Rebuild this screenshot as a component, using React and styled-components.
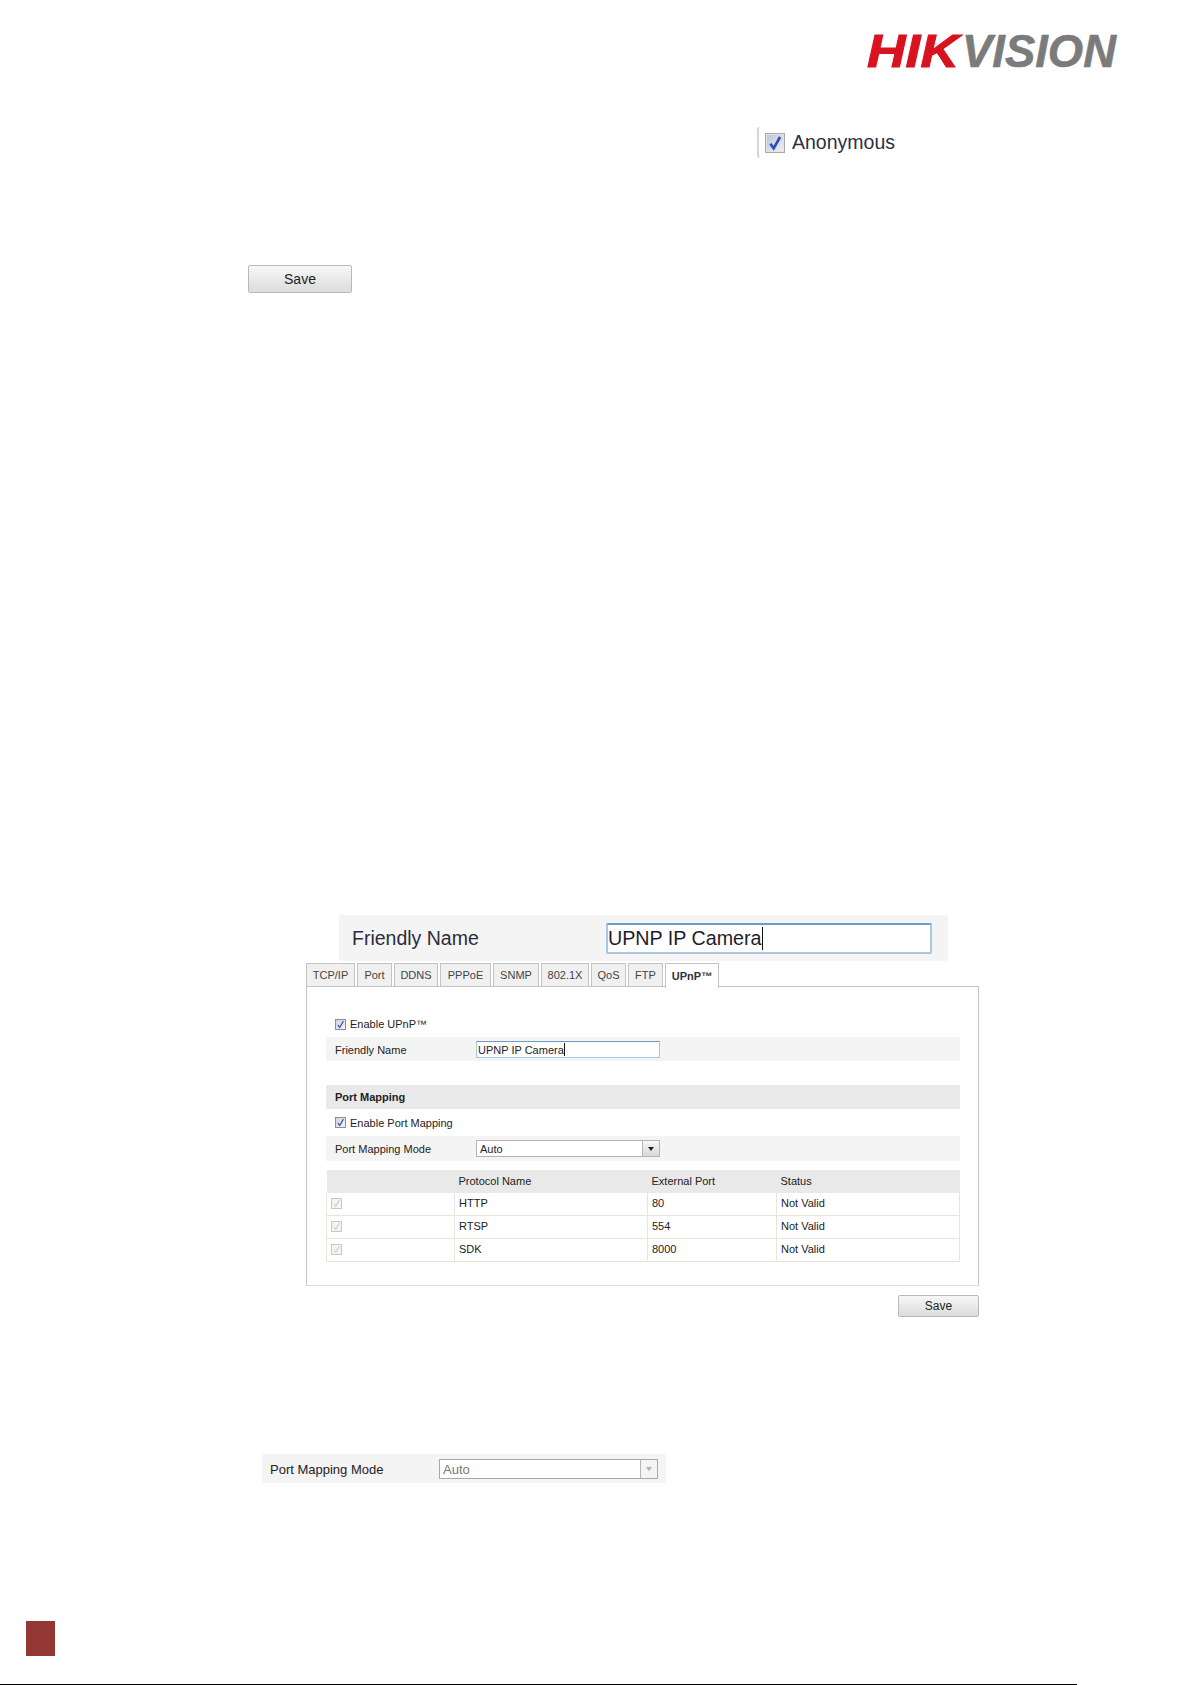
import React from 'react'
import styled, { createGlobalStyle } from 'styled-components'

const GlobalStyle = createGlobalStyle`
    html, body {
        margin: 0;
        padding: 0;
        background: #fff;
    }
    body {
        font-family: "Liberation Sans", Arial, sans-serif;
        color: #222;
    }
`

const Page = styled.div`
    width: 1192px;
    height: 1685px;
    display: flex;
    flex-direction: column;
    overflow: hidden;
`

const Header = styled.header`
    display: flex;
    justify-content: flex-end;
    padding: 25px 73px 0 0;
    height: 42px;
`

const LogoMark = styled.svg`
    flex: none;
    overflow: visible;
`

const AnonymousRow = styled.div`
    display: flex;
    align-items: center;
    margin: 60px 0 0 757px;
    height: 31px;
    border-left: 2px solid #d4d4d4;
    border-radius: 3px;
    width: 200px;
    padding-left: 6px;
    font-size: 19.5px;
    color: #2b2f45;
    gap: 7px;
`

const BigCheck = styled.span`
    width: 18px;
    height: 18px;
    border: 1px solid #a9a9a9;
    background: linear-gradient(135deg, #bcc4d6, #eef0f5);
    display: flex;
    align-items: center;
    justify-content: center;
    box-sizing: content-box;
    box-shadow: inset 0 0 0 1px #e4e4e4;
`

const SmallCheck = styled.span`
    box-sizing: border-box;
    width: 11px;
    height: 11px;
    flex: none;
    border: 1px solid ${p => (p.$disabled ? '#c8c8c8' : '#8e8e8e')};
    background: ${p => (p.$disabled ? '#f4f4f4' : 'linear-gradient(135deg, #cfd4e2, #f2f3f7)')};
    display: flex;
    align-items: center;
    justify-content: center;
`

const SaveButton = styled.button`
    display: block;
    width: ${p => p.$w}px;
    height: ${p => p.$h}px;
    margin: ${p => p.$margin};
    padding: 0;
    border: 1px solid #b9b9b9;
    border-radius: 2px;
    background: linear-gradient(#f7f7f7, #dcdcdc);
    font-family: inherit;
    font-size: ${p => p.$size}px;
    color: #222;
`

const BigNameRow = styled.div`
    display: flex;
    align-items: center;
    box-sizing: border-box;
    width: 609px;
    height: 46px;
    margin: 622px 0 0 339px;
    padding-left: 13px;
    background: #f4f4f4;
    font-size: 19.5px;
    color: #2d2b3c;
`

const BigNameLabel = styled.span`
    width: 254px;
`

const BigNameInput = styled.div`
    display: flex;
    align-items: center;
    box-sizing: border-box;
    width: 326px;
    height: 31px;
    background: #fff;
    border: 2px solid #a5c8e4;
    border-top-color: #6a9cc4;
    border-radius: 2px;
    font-size: 19.7px;
    color: #1d1d2b;
`

const Caret = styled.span`
    width: 1px;
    height: ${p => p.$h}px;
    background: #111;
`

const TabStrip = styled.div`
    display: flex;
    gap: 2px;
    margin: 2px 0 0 306px;
    height: 24px;
    position: relative;
    z-index: 1;
`

const Tab = styled.div`
    box-sizing: border-box;
    width: ${p => p.$w}px;
    height: ${p => (p.$active ? 25 : 24)}px;
    display: flex;
    align-items: center;
    justify-content: center;
    border: 1px solid #c4c4c4;
    border-bottom: ${p => (p.$active ? 'none' : '1px solid #c4c4c4')};
    background: ${p => (p.$active ? '#fff' : '#f0f0f0')};
    font-size: 11px;
    font-weight: ${p => (p.$active ? 700 : 400)};
    color: ${p => (p.$active ? '#333' : '#444')};
`

const Panel = styled.section`
    box-sizing: border-box;
    width: 673px;
    height: 300px;
    margin: -1px 0 0 306px;
    padding: 24px 18px 0 19px;
    border: 1px solid #c4c4c4;
    border-bottom-color: #dcdcdc;
    font-size: 11px;
`

const CheckRow = styled.div`
    display: flex;
    align-items: center;
    gap: 4px;
    height: ${p => p.$h}px;
    padding-left: 9px;
`

const FieldRow = styled.div`
    display: flex;
    align-items: center;
    box-sizing: border-box;
    height: ${p => p.$h}px;
    padding: ${p => (p.$nudge ? '1px' : '0')} 0 0 9px;
    background: #f4f4f4;
`

const FieldLabel = styled.span`
    width: 141px;
`

const TextField = styled.div`
    display: flex;
    align-items: center;
    box-sizing: border-box;
    width: 184px;
    height: 17px;
    padding-left: 1px;
    background: #fff;
    border: 1px solid #a5c8e4;
    border-top-color: #6a9cc4;
    border-radius: 1px;
`

const SectionTitle = styled.div`
    display: flex;
    align-items: center;
    height: 24px;
    margin-top: 24px;
    padding-left: 9px;
    background: #e9e9e9;
    font-weight: 700;
`

const Select = styled.div`
    display: flex;
    align-items: center;
    justify-content: space-between;
    box-sizing: border-box;
    width: ${p => p.$w}px;
    height: ${p => p.$h}px;
    padding-left: 3px;
    background: #fff;
    border: 1px solid ${p => (p.$disabled ? '#a8a8a8' : '#b4b4b4')};
    color: ${p => (p.$disabled ? '#777' : '#222')};
`

const SelectArrow = styled.span`
    flex: none;
    width: 17px;
    height: 100%;
    box-sizing: border-box;
    display: flex;
    align-items: center;
    justify-content: center;
    border-left: 1px solid #b4b4b4;
    background: ${p => (p.$disabled ? '#f4f4f4' : 'linear-gradient(#f8f8f8, #d8d8d8)')};
    &::after {
        content: '';
        border-style: solid;
        border-width: 4px 3.5px 0;
        border-color: ${p => (p.$disabled ? '#b0b0b0' : '#222')} transparent transparent;
    }
`

const PortTable = styled.table`
    width: 633px;
    margin-top: 9px;
    border-collapse: collapse;
    table-layout: fixed;
    font-size: 11px;
    th {
        height: 22px;
        padding: 0 0 1px 4px;
        background: #e9e9e9;
        text-align: left;
        font-weight: 400;
    }
    td {
        box-sizing: border-box;
        height: 23px;
        padding: 0 0 1px 4px;
        border: 1px solid #e8e6d9;
    }
    tbody tr:first-child td {
        height: 22px;
        border-top: none;
    }
`

const BottomRow = styled.div`
    display: flex;
    align-items: center;
    box-sizing: border-box;
    width: 404px;
    height: 29px;
    margin: 137px 0 0 262px;
    padding: 1px 0 0 8px;
    background: #f4f4f4;
    font-size: 13px;
`

const BottomLabel = styled.span`
    width: 169px;
`

const Footer = styled.footer`
    margin-top: auto;
`

const PageMark = styled.div`
    width: 29px;
    height: 35px;
    margin-left: 26px;
    background: #943634;
`

const FootLine = styled.div`
    width: 1077px;
    height: 1px;
    margin-top: 28px;
    background: #000;
`

const TickMark = ({ size, color, width }) => (
    <svg width={size} height={size} viewBox="0 0 12 12" fill="none">
        <path d="M2.5 6.5 L5 10 L9.8 1.5" stroke={color} strokeWidth={width} />
    </svg>
)

const Logo = () => (
    <LogoMark width="252" height="55" viewBox="0 0 252 55">
        <text x="0" y="42" fontFamily="Liberation Sans" fontSize="46" fontWeight="700" fontStyle="italic"
            fill="#d8121f" stroke="#d8121f" strokeWidth="1" textLength="92" lengthAdjust="spacingAndGlyphs">HIK</text>
        <text x="95" y="42" fontFamily="Liberation Sans" fontSize="46" fontWeight="700" fontStyle="italic"
            fill="#7b7b7b" stroke="#7b7b7b" strokeWidth="0.6" textLength="154" lengthAdjust="spacingAndGlyphs">VISION</text>
    </LogoMark>
)

const tabs = [
    ['TCP/IP', 49],
    ['Port', 35],
    ['DDNS', 44],
    ['PPPoE', 51],
    ['SNMP', 46],
    ['802.1X', 48],
    ['QoS', 35],
    ['FTP', 35],
    ['UPnP™', 54],
]

const ports = [
    ['HTTP', '80'],
    ['RTSP', '554'],
    ['SDK', '8000'],
]

const App = () => (
    <Page>
        <GlobalStyle />
        <Header>
            <Logo />
        </Header>
        <AnonymousRow>
            <BigCheck>
                <TickMark size={16} color="#2f4fb0" width={2} />
            </BigCheck>
            Anonymous
        </AnonymousRow>
        <SaveButton $w={104} $h={28} $size={14} $margin="107px 0 0 248px">Save</SaveButton>

        <BigNameRow>
            <BigNameLabel>Friendly Name</BigNameLabel>
            <BigNameInput>UPNP IP Camera<Caret $h={23} /></BigNameInput>
        </BigNameRow>

        <TabStrip>
            {tabs.map(([label, w], i) => (
                <Tab key={label} $w={w} $active={i === tabs.length - 1}>{label}</Tab>
            ))}
        </TabStrip>
        <Panel>
            <CheckRow $h={26}>
                <SmallCheck><TickMark size={9} color="#3a4fa0" width={1.6} /></SmallCheck>
                Enable UPnP™
            </CheckRow>
            <FieldRow $h={24} $nudge>
                <FieldLabel>Friendly Name</FieldLabel>
                <TextField>UPNP IP Camera<Caret $h={13} /></TextField>
            </FieldRow>
            <SectionTitle>Port Mapping</SectionTitle>
            <CheckRow $h={27}>
                <SmallCheck><TickMark size={9} color="#3a4fa0" width={1.6} /></SmallCheck>
                Enable Port Mapping
            </CheckRow>
            <FieldRow $h={25}>
                <FieldLabel>Port Mapping Mode</FieldLabel>
                <Select $w={184} $h={17}>Auto<SelectArrow /></Select>
            </FieldRow>
            <PortTable>
                <colgroup>
                    <col width="128" />
                    <col width="193" />
                    <col width="129" />
                    <col width="183" />
                </colgroup>
                <thead>
                    <tr>
                        <th></th>
                        <th>Protocol Name</th>
                        <th>External Port</th>
                        <th>Status</th>
                    </tr>
                </thead>
                <tbody>
                    {ports.map(([name, port]) => (
                        <tr key={name}>
                            <td><SmallCheck $disabled><TickMark size={9} color="#b4b4b4" width={1} /></SmallCheck></td>
                            <td>{name}</td>
                            <td>{port}</td>
                            <td>Not Valid</td>
                        </tr>
                    ))}
                </tbody>
            </PortTable>
        </Panel>
        <SaveButton $w={81} $h={22} $size={12} $margin="9px 0 0 898px">Save</SaveButton>

        <BottomRow>
            <BottomLabel>Port Mapping Mode</BottomLabel>
            <Select $w={219} $h={20} $disabled>Auto<SelectArrow $disabled /></Select>
        </BottomRow>

        <Footer>
            <PageMark />
            <FootLine />
        </Footer>
    </Page>
)

export default App
